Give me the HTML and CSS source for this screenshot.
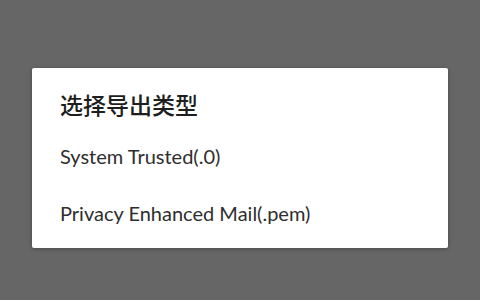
FILE: index.html
```html
<!DOCTYPE html>
<html lang="zh">
<head>
  <meta charset="UTF-8" />
  <title>选择导出类型</title>
  <link rel="stylesheet" href="styles.css">
</head>
<body>
  <div class="dialog">
    <h2 class="title">选择导出类型</h2>
    <div class="item">System Trusted(.0)</div>
    <div class="item">Privacy Enhanced Mail(.pem)</div>
  </div>
</body>
</html>
```

FILE: styles.css
```css
html, body {
  margin: 0;
  height: 100%;
}
body {
  background: #666666;
  font-family: Lato, "Noto Sans CJK SC", sans-serif;
  color: #222;
  padding-top: 68px;
  box-sizing: border-box;
}
.dialog {
  width: 416px;
  height: 180px;
  margin: 0 auto;
  background: #fff;
  border-radius: 2px;
  box-shadow: 0 1px 4px rgba(0, 0, 0, 0.3);
  padding: 20px 0 0 28px;
  box-sizing: border-box;
}
.title {
  margin: 0 0 8px;
  font-family: "Noto Sans CJK SC", sans-serif;
  font-size: 23px;
  font-weight: 500;
  line-height: 32px;
  color: #1e1e1e;
}
.item {
  font-size: 20px;
  line-height: 57px;
  color: #2e2e2e;
}
```
